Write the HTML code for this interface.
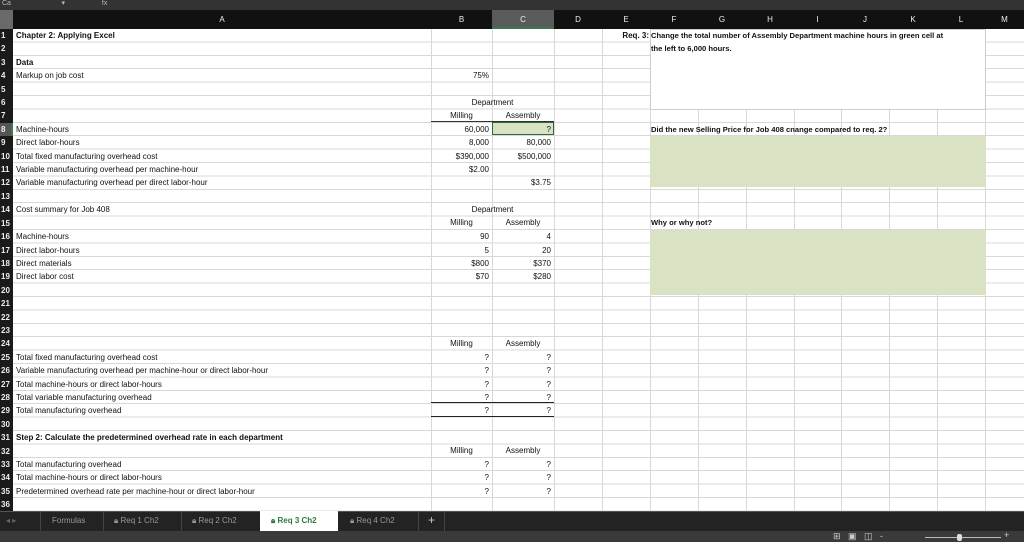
<!DOCTYPE html>
<html><head><meta charset="utf-8"><style>
*{margin:0;padding:0;box-sizing:border-box}
body{width:1024px;height:542px;overflow:hidden;background:#fff;font-family:"Liberation Sans",Arial,sans-serif;font-size:8px;color:#111;position:relative}
.a{position:absolute;white-space:nowrap}
.t{position:absolute;white-space:nowrap;height:13.4px;line-height:13.4px}
.b{font-weight:bold}
.r{text-align:right}
.c{text-align:center}
</style></head><body>
<!-- top bar -->
<div class="a" style="left:0;top:0;width:1024px;height:10px;background:#333"></div>
<div class="a" style="left:0;top:0;color:#bbb;font-size:7px;line-height:8px">&nbsp;Ca&nbsp;&nbsp;&nbsp;&nbsp;&nbsp;&nbsp;&nbsp;&nbsp;&nbsp;&nbsp;&nbsp;&nbsp;&nbsp;&nbsp;&nbsp;&nbsp;&nbsp;&nbsp;&nbsp;&nbsp;&nbsp;&nbsp;&nbsp;&nbsp;&nbsp;&nbsp;▾&nbsp;&nbsp;&nbsp;&nbsp;&nbsp;&nbsp;&nbsp;&nbsp;&nbsp;&nbsp;&nbsp;&nbsp;&nbsp;&nbsp;&nbsp;&nbsp;&nbsp;&nbsp;&nbsp;fx</div>
<div class="a" style="left:0;top:10px;width:1024px;height:19px;background:#111"></div>
<div class="a" style="left:0;top:10px;width:13px;height:19px;background:#6a6a6a"></div>
<div class="a" style="left:492px;top:10px;width:62px;height:19px;background:#5a5a5a;border-bottom:2px solid #3a7a4a"></div>
<!-- column headers -->
<div class="a c" style="left:13px;top:14px;width:418px;color:#eee;line-height:12px">A</div>
<div class="a c" style="left:431px;top:14px;width:61px;color:#eee;line-height:12px">B</div>
<div class="a c" style="left:492px;top:14px;width:62px;color:#eee;line-height:12px">C</div>
<div class="a c" style="left:554px;top:14px;width:48px;color:#eee;line-height:12px">D</div>
<div class="a c" style="left:602px;top:14px;width:48px;color:#eee;line-height:12px">E</div>
<div class="a c" style="left:650px;top:14px;width:48px;color:#eee;line-height:12px">F</div>
<div class="a c" style="left:698px;top:14px;width:48px;color:#eee;line-height:12px">G</div>
<div class="a c" style="left:746px;top:14px;width:48px;color:#eee;line-height:12px">H</div>
<div class="a c" style="left:794px;top:14px;width:47px;color:#eee;line-height:12px">I</div>
<div class="a c" style="left:841px;top:14px;width:48px;color:#eee;line-height:12px">J</div>
<div class="a c" style="left:889px;top:14px;width:48px;color:#eee;line-height:12px">K</div>
<div class="a c" style="left:937px;top:14px;width:48px;color:#eee;line-height:12px">L</div>
<div class="a c" style="left:985px;top:14px;width:39px;color:#eee;line-height:12px">M</div>
<!-- grid -->
<div class="a" style="left:13px;top:29px;width:1011px;height:482px;background:repeating-linear-gradient(to bottom,transparent 0,transparent 12.4px,#d8d8d8 12.4px,#d8d8d8 13.4px)"></div>
<div class="a" style="left:431px;top:29px;width:1px;height:482px;background:#d8d8d8"></div>
<div class="a" style="left:492px;top:29px;width:1px;height:482px;background:#d8d8d8"></div>
<div class="a" style="left:554px;top:29px;width:1px;height:482px;background:#d8d8d8"></div>
<div class="a" style="left:602px;top:29px;width:1px;height:482px;background:#d8d8d8"></div>
<div class="a" style="left:650px;top:29px;width:1px;height:482px;background:#d8d8d8"></div>
<div class="a" style="left:698px;top:29px;width:1px;height:482px;background:#d8d8d8"></div>
<div class="a" style="left:746px;top:29px;width:1px;height:482px;background:#d8d8d8"></div>
<div class="a" style="left:794px;top:29px;width:1px;height:482px;background:#d8d8d8"></div>
<div class="a" style="left:841px;top:29px;width:1px;height:482px;background:#d8d8d8"></div>
<div class="a" style="left:889px;top:29px;width:1px;height:482px;background:#d8d8d8"></div>
<div class="a" style="left:937px;top:29px;width:1px;height:482px;background:#d8d8d8"></div>
<div class="a" style="left:985px;top:29px;width:1px;height:482px;background:#d8d8d8"></div>
<!-- white text box -->
<div class="a" style="left:650px;top:29px;width:336px;height:81px;background:#fff;border:1px solid #ccc"></div>
<!-- green boxes -->
<div class="a" style="left:650px;top:136px;width:336px;height:51px;background:#d9e3c3"></div>
<div class="a" style="left:650px;top:230px;width:336px;height:65px;background:#d9e3c3"></div>
<!-- green input cell C8 -->
<div class="a" style="left:492px;top:122px;width:62px;height:13px;background:#d9e3c3;border:1.5px solid #2f6a3a"></div>
<!-- row header column -->
<div class="a" style="left:0;top:29px;width:13px;height:482px;background:#1a1a1a;color:#eee;font-weight:bold;font-size:8px;line-height:13.4px;padding-left:1px">1<br>2<br>3<br>4<br>5<br>6<br>7<br><span style="display:block;background:#555;margin-left:-1px;padding-left:1px;border-right:2px solid #3a7a4a">8</span>9<br>10<br>11<br>12<br>13<br>14<br>15<br>16<br>17<br>18<br>19<br>20<br>21<br>22<br>23<br>24<br>25<br>26<br>27<br>28<br>29<br>30<br>31<br>32<br>33<br>34<br>35<br>36</div>
<!-- column A text -->
<div class="a" style="left:16px;top:29px;line-height:13.4px">
<b>Chapter 2: Applying Excel</b><br><br><b>Data</b><br>Markup on job cost<br><br><br><br>Machine-hours<br>Direct labor-hours<br>Total fixed manufacturing overhead cost<br>Variable manufacturing overhead per machine-hour<br>Variable manufacturing overhead per direct labor-hour<br><br>Cost summary for Job 408<br><br>Machine-hours<br>Direct labor-hours<br>Direct materials<br>Direct labor cost<br><br><br><br><br><br>Total fixed manufacturing overhead cost<br>Variable manufacturing overhead per machine-hour or direct labor-hour<br>Total machine-hours or direct labor-hours<br>Total variable manufacturing overhead<br>Total manufacturing overhead<br><br><b>Step 2: Calculate the predetermined overhead rate in each department</b><br><br>Total manufacturing overhead<br>Total machine-hours or direct labor-hours<br>Predetermined overhead rate per machine-hour or direct labor-hour</div>
<!-- column B (right) -->
<div class="a r" style="left:431px;top:29px;width:58px;line-height:13.4px">
<br><br><br>75%<br><br><br><br>60,000<br>8,000<br>$390,000<br>$2.00<br><br><br><br><br>90<br>5<br>$800<br>$70<br><br><br><br><br><br>?<br>?<br>?<br>?<br>?<br><br><br><br>?<br>?<br>?</div>
<div class="a r" style="left:492px;top:29px;width:59px;line-height:13.4px">
<br><br><br><br><br><br><br>?<br>80,000<br>$500,000<br><br>$3.75<br><br><br><br>4<br>20<br>$370<br>$280<br><br><br><br><br><br>?<br>?<br>?<br>?<br>?<br><br><br><br>?<br>?<br>?</div>
<!-- centered headings -->
<div class="t c" style="left:431px;top:96px;width:123px">Department</div>
<div class="t c" style="left:431px;top:109.4px;width:61px">Milling</div>
<div class="t c" style="left:492px;top:109.4px;width:62px">Assembly</div>
<div class="t c" style="left:431px;top:203px;width:123px">Department</div>
<div class="t c" style="left:431px;top:216px;width:61px">Milling</div>
<div class="t c" style="left:492px;top:216px;width:62px">Assembly</div>
<div class="t c" style="left:431px;top:337px;width:61px">Milling</div>
<div class="t c" style="left:492px;top:337px;width:62px">Assembly</div>
<div class="t c" style="left:431px;top:444px;width:61px">Milling</div>
<div class="t c" style="left:492px;top:444px;width:62px">Assembly</div>
<!-- borders under some cells -->
<div class="a" style="left:431px;top:121px;width:123px;height:1px;background:#333"></div>
<div class="a" style="left:431px;top:402px;width:123px;height:1px;background:#222"></div>
<div class="a" style="left:431px;top:416px;width:123px;height:1px;background:#222"></div>
<!-- right text -->
<div class="t b r" style="left:602px;top:29px;width:47px">Req. 3:</div>
<div class="t b" style="left:651px;top:29px;font-size:7.6px">Change the total number of Assembly Department machine hours in green cell at</div>
<div class="t b" style="left:651px;top:42.4px;font-size:7.6px">the left to 6,000 hours.</div>
<div class="t b" style="left:651px;top:122.6px;font-size:7.6px">Did the new Selling Price for Job 408 cnange compared to req. 2?</div>
<div class="t b" style="left:651px;top:216px;font-size:7.6px">Why or why not?</div>
<!-- tab bar -->
<div class="a" style="left:0;top:511px;width:1024px;height:20px;background:#232323;border-top:1px solid #555"></div>
<div class="a" style="left:6px;top:516px;color:#666;font-size:8px">◂ ▸</div>
<div class="a" style="left:40px;top:512px;width:1px;height:19px;background:#444"></div>
<div class="a" style="left:52px;top:516px;color:#999">Formulas</div>
<div class="a" style="left:103px;top:512px;width:1px;height:19px;background:#444"></div>
<div class="a" style="left:114px;top:516px;color:#999">🔒︎ Req 1 Ch2</div>
<div class="a" style="left:181px;top:512px;width:1px;height:19px;background:#444"></div>
<div class="a" style="left:192px;top:516px;color:#999">🔒︎ Req 2 Ch2</div>
<div class="a" style="left:260px;top:511px;width:78px;height:20px;background:#fff"></div>
<div class="a" style="left:271px;top:516px;color:#2f7a3f;font-weight:bold">🔒︎ Req 3 Ch2</div>
<div class="a" style="left:350px;top:516px;color:#999">🔒︎ Req 4 Ch2</div>
<div class="a" style="left:418px;top:512px;width:1px;height:19px;background:#444"></div>
<div class="a" style="left:428px;top:513px;color:#ccc;font-size:12px">+</div>
<div class="a" style="left:444px;top:512px;width:1px;height:19px;background:#444"></div>
<!-- status bar -->
<div class="a" style="left:0;top:531px;width:1024px;height:11px;background:#3a3a3a"></div>
<div class="a" style="left:833px;top:532px;color:#ccc;font-size:9px;line-height:9px">⊞&nbsp;&nbsp;&nbsp;▣&nbsp;&nbsp;&nbsp;◫&nbsp;&nbsp;&nbsp;-</div>
<div class="a" style="left:925px;top:537px;width:76px;height:1px;background:#bbb"></div>
<div class="a" style="left:957px;top:534px;width:5px;height:7px;background:#ddd;border-radius:2px"></div>
<div class="a" style="left:1004px;top:531px;color:#ccc;font-size:9px;line-height:9px">+</div>
</body></html>
